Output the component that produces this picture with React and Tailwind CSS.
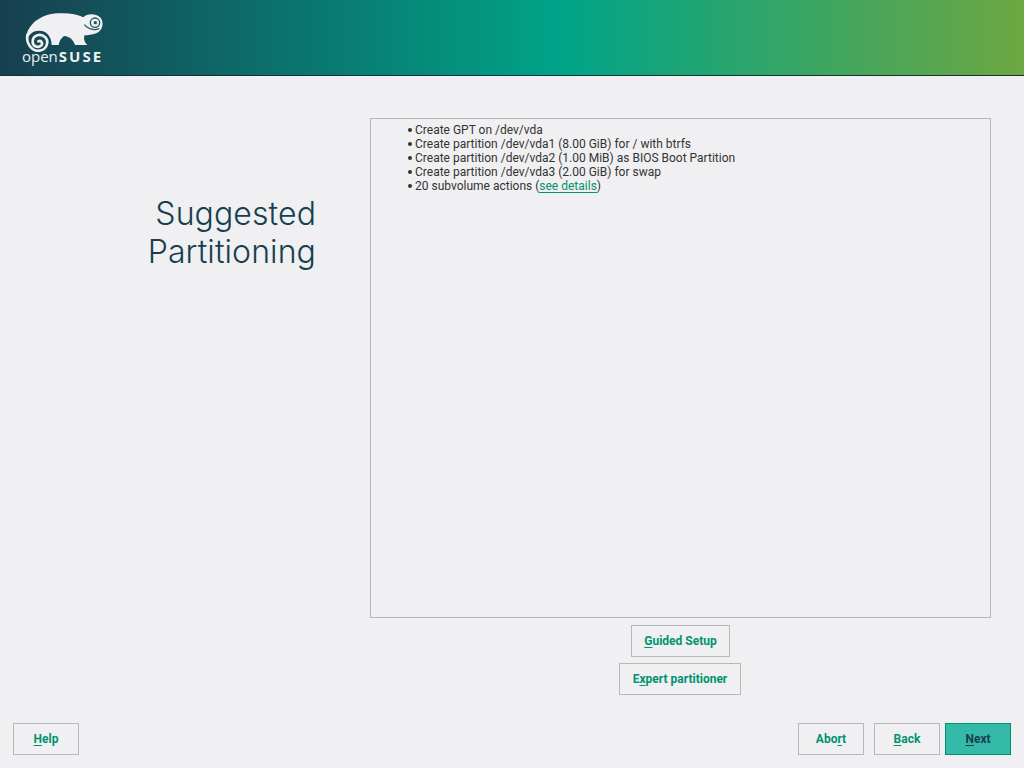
const steps = [
  "Create GPT on /dev/vda",
  "Create partition /dev/vda1 (8.00 GiB) for / with btrfs",
  "Create partition /dev/vda2 (1.00 MiB) as BIOS Boot Partition",
  "Create partition /dev/vda3 (2.00 GiB) for swap",
];

function Logo() {
  return (
    <div className="relative w-[88px] h-[56px]">
      <svg width="88" height="40" viewBox="0 0 264 120" className="block overflow-visible">
        <path
          fill="#f0f0f2"
          d="M18 85 C20 50 55 12 115 10 C145 8 170 12 190 22 C200 10 230 8 243 25 C252 40 248 60 232 68 C218 74 202 76 194 76 C190 84 192 95 202 105 L165 105 C160 90 150 80 132 78 C122 85 118 95 116 105 L95 105 C95 80 80 62 58 62 C40 62 26 72 22 90 Z"
        />
        <path
          fill="none"
          stroke="#f0f0f2"
          strokeWidth="8"
          strokeLinecap="round"
          d="M22 75 C18 100 35 125 58 122 C80 120 88 95 76 82 C62 68 38 75 38 95 C38 110 55 115 64 106 C70 98 62 90 55 94"
        />
        <circle cx="225" cy="38" r="14" fill="#f0f0f2" stroke="#175a62" strokeWidth="4" />
        <circle cx="226" cy="38" r="5" fill="#175a62" />
        <path d="M193 44 C205 58 220 62 238 56" fill="none" stroke="#175a62" strokeWidth="4" />
      </svg>
      <span className="absolute left-[2px] top-[37px] text-[15px] leading-[18px] text-[#f0f0f2] font-['Open_Sans',sans-serif] whitespace-nowrap">
        open<span className="font-bold tracking-[2px] ml-[1px]">SUSE</span>
      </span>
    </div>
  );
}

function Btn({ children, primary, className = "" }) {
  return (
    <button
      className={`h-[32px] border text-[12px] font-bold ${primary ? "bg-[#35b9a8] border-[#00926f] text-[#173f4f]" : "border-[#b8b8b8] text-[#00936f]"} ${className}`}
    >
      {children}
    </button>
  );
}

function Key({ children }) {
  return <u className="underline-offset-2">{children}</u>;
}

export default function App() {
  return (
    <div className="w-[1024px] h-[768px] overflow-hidden flex flex-col bg-[#f0f0f2] font-['Roboto',sans-serif]">
      <header className="h-[76px] shrink-0 flex items-start pl-[20px] pt-[10px] border-b border-[#16303a] bg-[linear-gradient(90deg,#173f4f_0%,#00a489_55%,#6da741_100%)]">
        <Logo />
      </header>

      <div className="flex flex-1 min-h-0 pt-[42px]">
        <div className="w-[316px] shrink-0 pt-[77px] text-right">
          <h1 className="text-[32px] leading-[38px] font-light tracking-[0.1px] text-[#173f4f] font-['Inter',sans-serif]">
            Suggested
            <br />
            Partitioning
          </h1>
        </div>

        <div className="ml-[54px] w-[621px] flex flex-col items-center">
          <div className="w-full h-[500px] border border-[#b8b8b8] pl-[37px] pt-[4px] text-[12px] leading-[14px] text-[#333]">
            <ul>
              {steps.map((s) => (
                <li key={s} className="flex items-center">
                  <span className="w-[4px] h-[4px] mr-[3px] rounded-full bg-[#333]" />
                  {s}
                </li>
              ))}
              <li className="flex items-center">
                <span className="w-[4px] h-[4px] mr-[3px] rounded-full bg-[#333]" />
                <span>
                  20 subvolume actions (
                  <a className="text-[#00936f] underline underline-offset-2">see details</a>)
                </span>
              </li>
            </ul>
          </div>
          <Btn className="mt-[7px] w-[99px]">
            <Key>G</Key>uided Setup
          </Btn>
          <Btn className="mt-[6px] w-[122px] mr-[1px]">
            E<Key>x</Key>pert partitioner
          </Btn>
        </div>
      </div>

      <footer className="h-[45px] shrink-0 flex items-start pl-[13px] pr-[13px]">
        <Btn className="w-[66px]">
          <Key>H</Key>elp
        </Btn>
        <div className="ml-auto flex">
          <Btn className="w-[66px] mr-[10px]">
            Abo<Key>r</Key>t
          </Btn>
          <Btn className="w-[66px] mr-[5px]">
            <Key>B</Key>ack
          </Btn>
          <Btn primary className="w-[66px]">
            <Key>N</Key>ext
          </Btn>
        </div>
      </footer>
    </div>
  );
}
